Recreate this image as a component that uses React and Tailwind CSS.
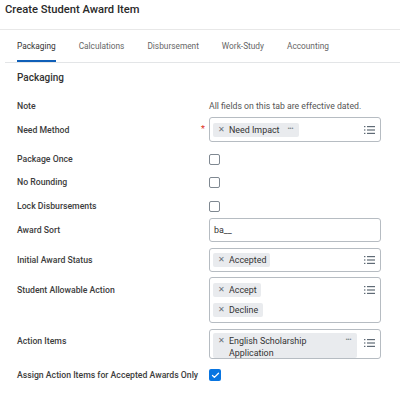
import { Check } from 'lucide-react'

const TABS = ['Packaging', 'Calculations', 'Disbursement', 'Work-Study', 'Accounting']

function ListIcon() {
  return (
    <svg width="11" height="8" viewBox="0 0 11 8" className="shrink-0 text-[#5f6a75]">
      <rect x="0" y="0" width="1.4" height="1.2" fill="currentColor" />
      <rect x="3" y="0" width="8" height="1.2" fill="currentColor" />
      <rect x="0" y="3.4" width="1.4" height="1.2" fill="currentColor" />
      <rect x="3" y="3.4" width="8" height="1.2" fill="currentColor" />
      <rect x="0" y="6.8" width="1.4" height="1.2" fill="currentColor" />
      <rect x="3" y="6.8" width="8" height="1.2" fill="currentColor" />
    </svg>
  )
}

function Chip({ children, more, className = '' }) {
  return (
    <div className={`flex items-start bg-[#e9ebee] rounded-[2px] pl-[5px] pr-[6px] py-[1px] ${className}`}>
      <span className="text-[#6b747c] text-[8px] leading-[12px] mr-[4px]">✕</span>
      <span className="text-[#333] leading-[12px] flex-1">{children}</span>
      {more && <span className="text-[#7a838b] text-[7px] leading-[11px] ml-[6px] tracking-[-0.5px]">•••</span>}
    </div>
  )
}

function Box({ children, className = '' }) {
  return (
    <div className={`w-[172px] border border-[#b6bcc2] rounded-[3px] flex ${className}`}>
      {children}
    </div>
  )
}

function Checkbox({ checked }) {
  if (checked) {
    return (
      <div className="w-[12px] h-[12px] rounded-[2px] bg-[#0875e1] flex items-center justify-center">
        <Check size={9} strokeWidth={3.5} className="text-white" />
      </div>
    )
  }
  return <div className="w-[11px] h-[11px] rounded-[2px] border border-[#7f8891] bg-white" />
}

function Row({ label, required, className = '', labelClass = 'items-center', labelPad = '', children }) {
  return (
    <div className={`flex ${labelClass} ${className}`}>
      <div className={`w-[192px] flex justify-between items-center pr-[4px] shrink-0 ${labelPad}`}>
        <span className="font-medium text-[#3d3d3d] text-[8.7px]">{label}</span>
        {required && <span className="text-[#de2e21] text-[9px] leading-none">*</span>}
      </div>
      {children}
    </div>
  )
}

export default function App() {
  return (
    <div className="w-[400px] h-[399px] bg-white overflow-hidden font-['Roboto','Liberation_Sans',sans-serif] text-[8.9px] leading-[12px] text-[#333]">
      <div className="h-[30px] pl-[5px] pt-[3px] border-b border-[#e8e8e8]">
        <h1 className="text-[11.2px] leading-[14px] font-medium text-[#2a2a2a]">Create Student Award Item</h1>
      </div>

      <div className="ml-[5px] h-[33px] border-b border-[#e3e5e7] flex gap-[23px] pl-[12px] text-[8.3px]">
        {TABS.map((t, i) => (
          <div key={t} className={`h-full flex items-center pt-[1px] ${i === 0 ? 'border-b-2 border-[#0f5fb8] text-[#333]' : 'text-[#666] border-b-2 border-transparent'}`}>
            {t}
          </div>
        ))}
      </div>

      <div className="pl-[17px]">
        <h2 className="mt-[8px] text-[10px] leading-[14px] font-medium text-[#333]">Packaging</h2>

        <Row label="Note" className="mt-[11px] h-[20px]">
          <span className="text-[#555] text-[8.7px]">All fields on this tab are effective dated.</span>
        </Row>

        <Row label="Need Method" required className="mt-[1px]">
          <Box className="h-[25px] items-center pl-[3px] pr-[5px] justify-between">
            <Chip more className="w-[86px]">Need Impact</Chip>
            <ListIcon />
          </Box>
        </Row>

        <Row label="Package Once" className="mt-[6px] h-[22px]">
          <Checkbox />
        </Row>
        <Row label="No Rounding" className="h-[24px]">
          <Checkbox />
        </Row>
        <Row label="Lock Disbursements" className="h-[24px]">
          <Checkbox />
        </Row>

        <Row label="Award Sort">
          <Box className="h-[24px] items-center pl-[4px]">
            <span className="text-[#333]">ba__</span>
          </Box>
        </Row>

        <Row label="Initial Award Status" className="mt-[6px]">
          <Box className="h-[24px] items-center pl-[3px] pr-[5px] justify-between">
            <Chip className="w-[57px]">Accepted</Chip>
            <ListIcon />
          </Box>
        </Row>

        <Row label="Student Allowable Action" className="mt-[5px]" labelClass="items-start" labelPad="pt-[7px]">
          <Box className="h-[46px] pl-[3px] pr-[5px] pt-[5px] justify-between">
            <div className="flex flex-col items-start gap-[6px]">
              <Chip className="w-[48px]">Accept</Chip>
              <Chip className="w-[50px]">Decline</Chip>
            </div>
            <div className="pt-[3px]">
              <ListIcon />
            </div>
          </Box>
        </Row>

        <Row label="Action Items" className="mt-[6px]" labelClass="items-start" labelPad="pt-[6px]">
          <Box className="h-[30px] pl-[3px] pr-[5px] pt-[3px] justify-between">
            <Chip more className="w-[144px] py-[2px]">
              English Scholarship
              <br />
              Application
            </Chip>
            <div className="pt-[6px]">
              <ListIcon />
            </div>
          </Box>
        </Row>

        <Row label="Assign Action Items for Accepted Awards Only" className="mt-[6px] h-[20px]">
          <Checkbox checked />
        </Row>
      </div>
    </div>
  )
}
